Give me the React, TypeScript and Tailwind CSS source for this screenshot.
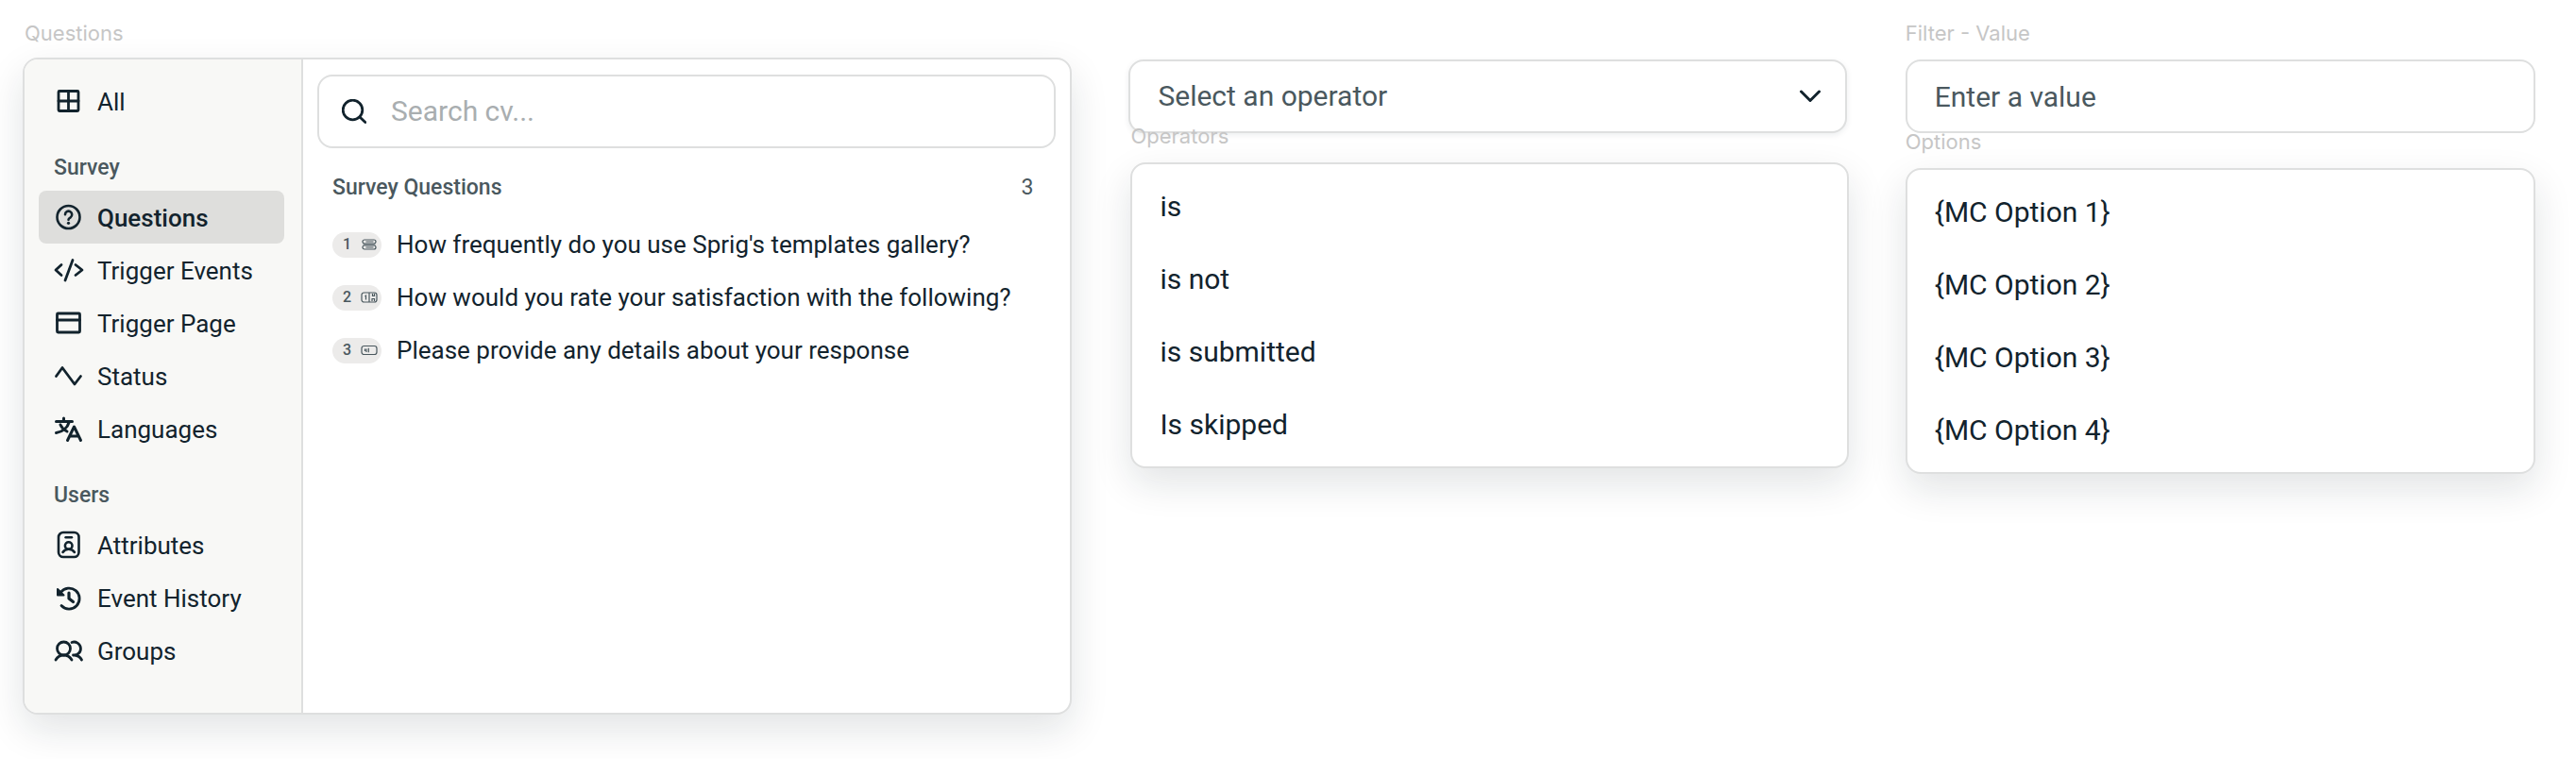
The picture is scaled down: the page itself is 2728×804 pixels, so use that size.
import { useState } from 'react';
import type { ReactNode } from 'react';
import { clsx } from 'clsx';

const operators = ['is', 'is not', 'is submitted', 'Is skipped'];
const valueOptions = ['{MC Option 1}', '{MC Option 2}', '{MC Option 3}', '{MC Option 4}'];

function Icon({ children }: { children: ReactNode }) {
  return (
    <svg
      viewBox="0 0 30 30"
      className="h-[30px] w-[30px] shrink-0 overflow-visible"
      fill="none"
      stroke="currentColor"
      strokeWidth="2.8"
      strokeLinecap="round"
      strokeLinejoin="round"
      aria-hidden="true"
    >
      {children}
    </svg>
  );
}

const icons = {
  all: (
    <Icon>
      <rect x="5" y="4.5" width="21" height="21" rx="1" />
      <path d="M15.5 4.5v21M5 15h21" />
    </Icon>
  ),
  questions: (
    <Icon>
      <circle cx="15.5" cy="15" r="12" strokeWidth="2.6" />
      <path d="M12 12.3a3.6 3.6 0 1 1 5.6 3c-1.4.8-2.1 1.2-2.1 2.4" strokeWidth="2.6" />
      <circle cx="15.5" cy="21.3" r="1.6" fill="currentColor" stroke="none" />
    </Icon>
  ),
  triggerEvents: (
    <Icon>
      <path d="M8 9.5 2 15l6 5.5M23 9.5l7 5.5-7 5.5M20 4.5 12 26" />
    </Icon>
  ),
  triggerPage: (
    <Icon>
      <rect x="3.5" y="5" width="24" height="20" rx="1" />
      <path d="M3.5 12h24" />
    </Icon>
  ),
  status: (
    <Icon>
      <path d="M2.5 15.5 9 6.5 22 24l6.5-8.5" />
    </Icon>
  ),
  languages: (
    <Icon>
      <path d="M2.5 7.5h17M10.5 4v3M16 8.5C14.5 14 9.5 18.5 2.5 19.5M7 11c1.500 3.500 4 5.500 7 7M14.500 27.500 21.500 13l7 14.500M17 23h9" strokeWidth="3" />
    </Icon>
  ),
  attributes: (
    <Icon>
      <rect x="5" y="2" width="21.5" height="26" rx="5" strokeWidth="2.6" />
      <path d="M12.5 7.3h6.5" strokeWidth="2.4" />
      <circle cx="15.7" cy="16" r="3.8" strokeWidth="2.6" />
      <path d="M9.5 23c1.2-2 3.4-3.2 6.2-3.2s5 1.2 6.2 3.2" strokeWidth="2.6" />
    </Icon>
  ),
  history: (
    <Icon>
      <path d="M7.3 9.5A11 11 0 1 1 8 23.5" />
      <path d="M4 6v6.5h6.500z" fill="currentColor" strokeWidth="2" />
      <path d="M16 10v6l4.5 3.5" strokeWidth="3.2" />
    </Icon>
  ),
  groups: (
    <Icon>
      <circle cx="10.5" cy="13" r="7" />
      <path d="M2 25c1.8-3.2 4.8-5 8.5-5s6.700 1.800 8.500 5" />
      <path d="M19 6.500a7 7 0 1 1 1.500 13.500M22 20c3.300.3 6 2 7.500 5" />
    </Icon>
  ),
};

const surveyItems = [
  { id: 'questions', label: 'Questions', icon: icons.questions },
  { id: 'events', label: 'Trigger Events', icon: icons.triggerEvents },
  { id: 'page', label: 'Trigger Page', icon: icons.triggerPage },
  { id: 'status', label: 'Status', icon: icons.status },
  { id: 'languages', label: 'Languages', icon: icons.languages },
];

const userItems = [
  { id: 'attributes', label: 'Attributes', icon: icons.attributes },
  { id: 'history', label: 'Event History', icon: icons.history },
  { id: 'groups', label: 'Groups', icon: icons.groups },
];

function PillIcon({ children }: { children: ReactNode }) {
  return (
    <svg viewBox="0 0 18 12" className="h-3 w-[18px]" fill="none" stroke="currentColor" strokeWidth="1.2" aria-hidden="true">
      {children}
    </svg>
  );
}

const questions = [
  {
    text: "How frequently do you use Sprig's templates gallery?",
    icon: (
      <PillIcon>
        <rect x="2" y="1" width="14" height="4" rx="2" />
        <rect x="2" y="7" width="14" height="4" rx="2" />
        <path d="M5.5 3h8M5.5 9h8M2.5 6h13" />
      </PillIcon>
    ),
  },
  {
    text: 'How would you rate your satisfaction with the following?',
    icon: (
      <PillIcon>
        <rect x="1" y="1" width="16" height="10" rx="2.5" />
        <path d="M9 1v10M4.5 5l1-.8V8.5M12.5 2v2.5h2V2M12 10V7.5h2.5V10" />
      </PillIcon>
    ),
  },
  {
    text: 'Please provide any details about your response',
    icon: (
      <PillIcon>
        <rect x="1" y="1.5" width="16" height="9" rx="2.5" />
        <path d="M4.5 4.5V7M6 4.5V8M8.300 3.800v4.500" />
      </PillIcon>
    ),
  },
];

type NavItemProps = {
  label: string;
  icon: ReactNode;
  active: boolean;
  onClick: () => void;
};

function NavItem({ label, icon, active, onClick }: NavItemProps) {
  return (
    <button
      type="button"
      onClick={onClick}
      aria-current={active ? 'true' : undefined}
      className={clsx(
        'flex h-14 w-full items-center gap-4 rounded-lg pl-4 text-left text-[26px] leading-8',
        active && 'bg-[#dededc] font-medium'
      )}
    >
      {icon}
      <span className="pt-[2px]">{label}</span>
    </button>
  );
}

function GroupHeading({ children }: { children: ReactNode }) {
  return <h3 className="px-4 pt-[31px] pb-3 text-[23px] leading-6 font-medium text-[#4a585e]">{children}</h3>;
}

function OptionList({ options, className }: { options: string[]; className?: string }) {
  return (
    <ul
      className={clsx(
        'rounded-2xl border-2 border-[#dedfdf] bg-white py-[6px] shadow-[0_16px_40px_rgba(17,35,45,0.12)]',
        className
      )}
    >
      {options.map(option => (
        <li key={option}>
          <button type="button" className="h-[77px] w-full px-[29px] text-left text-[30px] leading-9">
            {option}
          </button>
        </li>
      ))}
    </ul>
  );
}

export default function App() {
  const [active, setActive] = useState('questions');

  return (
    <main className="grid min-h-screen grid-cols-[1111fr_762fr_667fr] items-start gap-x-[60px] bg-white pt-[21px] pr-[43px] pl-6 font-['Roboto',sans-serif] text-[#12232d]">
      {/* Question picker */}
      <section>
        <h2 className="mb-3 px-[2px] font-['Inter',sans-serif] text-[22px] leading-7 text-[#c6c6c6]">Questions</h2>
        <div className="flex overflow-hidden rounded-2xl border-2 border-[#dedfdf] bg-white shadow-[0_16px_40px_rgba(17,35,45,0.12)]">
          <nav className="w-[295px] shrink-0 border-r-2 border-[#dedfdf] bg-[#f8f8f6] pt-4 pr-[18px] pb-[38px] pl-[15px]">
            <NavItem label="All" icon={icons.all} active={active === 'all'} onClick={() => setActive('all')} />
            <GroupHeading>Survey</GroupHeading>
            {surveyItems.map(item => (
              <NavItem
                key={item.id}
                label={item.label}
                icon={item.icon}
                active={active === item.id}
                onClick={() => setActive(item.id)}
              />
            ))}
            <GroupHeading>Users</GroupHeading>
            {userItems.map(item => (
              <NavItem
                key={item.id}
                label={item.label}
                icon={item.icon}
                active={active === item.id}
                onClick={() => setActive(item.id)}
              />
            ))}
          </nav>

          <div className="min-w-0 flex-1 px-[15px] pt-4">
            <label className="flex h-[78px] items-center gap-[26px] rounded-2xl border-2 border-[#dedfdf] px-6">
              <svg
                viewBox="0 0 26 26"
                className="h-[26px] w-[26px] shrink-0"
                fill="none"
                stroke="currentColor"
                strokeWidth="2.8"
                strokeLinecap="round"
                aria-hidden="true"
              >
                <circle cx="11.5" cy="11.5" r="10.3" />
                <path d="m19 19 5.8 5.5" />
              </svg>
              <input
                type="text"
                placeholder="Search cv..."
                aria-label="Search cv..."
                className="min-w-0 flex-1 bg-transparent text-[30px] leading-9 outline-none placeholder:text-[#a9aeb0]"
              />
            </label>

            <div className="flex justify-between pt-7 pr-6 pb-[18px] pl-4 text-[23px] leading-7 text-[#4a585e]">
              <h3 className="font-medium">Survey Questions</h3>
              <span>{questions.length}</span>
            </div>

            <ol>
              {questions.map((question, index) => (
                <li key={question.text}>
                  <button
                    type="button"
                    className="flex h-14 w-full items-center gap-4 pl-4 text-left text-[26px] leading-8 whitespace-nowrap"
                  >
                    <span className="flex h-[27px] w-[52px] items-center justify-between rounded-full bg-[#ecebea] pr-1 pl-[11px] text-base font-medium text-[#4a585e]">
                      {index + 1}
                      {question.icon}
                    </span>
                    {question.text}
                  </button>
                </li>
              ))}
            </ol>
          </div>
        </div>
      </section>

      {/* Operator */}
      <section className="pt-[42px]">
        <div className="relative mr-[2px]">
          <select
            aria-label="Select an operator"
            defaultValue=""
            className="h-[78px] w-full appearance-none rounded-2xl border-2 border-[#dedfdf] bg-white px-[29px] text-[30px] leading-9 text-[#4a585e] shadow-[0_2px_6px_rgba(17,35,45,0.08)]"
          >
            <option value="">Select an operator</option>
            {operators.map(operator => (
              <option key={operator}>{operator}</option>
            ))}
          </select>
          <svg
            viewBox="0 0 24 14"
            className="pointer-events-none absolute top-8 right-[27px] h-[14px] w-6"
            fill="none"
            stroke="currentColor"
            strokeWidth="3"
            strokeLinecap="round"
            strokeLinejoin="round"
            aria-hidden="true"
          >
            <path d="m2.5 2 9.5 9.500L21.500 2" />
          </svg>
        </div>
        <h2 className="relative -mt-[11px] mb-[14px] px-[2px] font-['Inter',sans-serif] text-[22px] leading-7 text-[#c6c6c6]">
          Operators
        </h2>
        <OptionList options={operators} className="ml-[2px]" />
      </section>

      {/* Value */}
      <section>
        <label htmlFor="filter-value" className="mb-[14px] block font-['Inter',sans-serif] text-[22px] leading-7 text-[#c6c6c6]">
          Filter - Value
        </label>
        <input
          id="filter-value"
          type="text"
          placeholder="Enter a value"
          className="block h-[78px] w-full rounded-2xl border-2 border-[#dedfdf] bg-white px-[29px] text-[30px] leading-9 outline-none placeholder:text-[#4a585e]"
        />
        <h2 className="relative -mt-[5px] mb-[14px] font-['Inter',sans-serif] text-[22px] leading-7 text-[#c6c6c6]">Options</h2>
        <OptionList options={valueOptions} />
      </section>
    </main>
  );
}
